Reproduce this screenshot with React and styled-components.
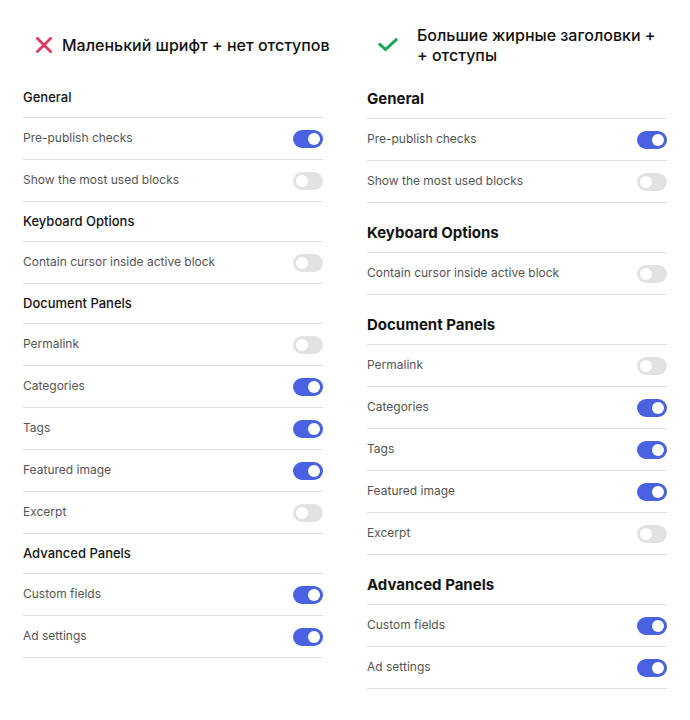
import styled, { createGlobalStyle } from 'styled-components';

const GlobalStyle = createGlobalStyle`
  html, body {
    margin: 0;
    padding: 0;
    background: #fff;
  }
  body {
    font-family: Inter, "Noto Sans", sans-serif;
    -webkit-font-smoothing: antialiased;
  }
`;

const Page = styled.div`
  width: 690px;
  padding: 25px 23px 0;
  box-sizing: border-box;
  display: grid;
  grid-template-columns: 300px 300px;
  column-gap: 44px;
`;

const Column = styled.div`
  display: flex;
  flex-direction: column;
`;

const Title = styled.div`
  height: 40px;
  display: flex;
  align-items: center;
  gap: ${props => props.$gap}px;
  padding-left: ${props => props.$indent}px;
  margin-bottom: ${props => props.$space}px;
  white-space: nowrap;
`;

const TitleIcon = styled.span`
  display: flex;
  align-items: center;
  justify-content: center;
  flex-shrink: 0;
`;

const TitleText = styled.span`
  font-size: 16px;
  line-height: 20px;
  font-weight: 500;
  color: #111;
`;

const Heading = styled.div`
  box-sizing: border-box;
  height: 40px;
  padding-bottom: ${props => props.$bold ? 0 : 2}px;
  margin-top: ${props => props.$bold ? 10 : 0}px;
  display: flex;
  align-items: center;
  border-bottom: 1px solid #e0e0e0;
  font-size: ${props => props.$bold ? 15 : 13}px;
  font-weight: ${props => props.$bold ? 700 : 500};
  color: #141414;
`;

const Row = styled.div`
  height: 41px;
  display: flex;
  align-items: center;
  justify-content: space-between;
  border-bottom: 1px solid #e0e0e0;
`;

const Label = styled.span`
  font-size: 12px;
  color: #555;
  margin-bottom: 2px;
`;

const Toggle = styled.span`
  position: relative;
  width: 30px;
  height: 18px;
  border-radius: 9px;
  background: ${props => props.$on ? '#4862e2' : '#e2e2e2'};

  &::after {
    content: '';
    position: absolute;
    top: 3px;
    left: ${props => props.$on ? '15px' : '3px'};
    width: 12px;
    height: 12px;
    border-radius: 50%;
    background: #fff;
  }
`;

const sections = [
  {
    title: 'General',
    items: [
      { label: 'Pre-publish checks', on: true },
      { label: 'Show the most used blocks', on: false },
    ],
  },
  {
    title: 'Keyboard Options',
    items: [{ label: 'Contain cursor inside active block', on: false }],
  },
  {
    title: 'Document Panels',
    items: [
      { label: 'Permalink', on: false },
      { label: 'Categories', on: true },
      { label: 'Tags', on: true },
      { label: 'Featured image', on: true },
      { label: 'Excerpt', on: false },
    ],
  },
  {
    title: 'Advanced Panels',
    items: [
      { label: 'Custom fields', on: true },
      { label: 'Ad settings', on: true },
    ],
  },
];

const CrossIcon = () => (
  <svg width="16" height="16" viewBox="0 0 16 16">
    <path d="M1.5 1.5 L14.5 14.5 M14.5 1.5 L1.5 14.5" stroke="#dc3a5e" strokeWidth="2.8" strokeLinecap="square" fill="none" />
  </svg>
);

const CheckIcon = () => (
  <svg width="20" height="14" viewBox="0 0 20 14">
    <path d="M2 6.5 L7.5 11.5 L18 1.8" stroke="#1ba653" strokeWidth="3" strokeLinecap="square" fill="none" />
  </svg>
);

const Settings = ({ bold }) => (
  <>
    {sections.map(section => (
      <div key={section.title}>
        <Heading $bold={bold}>{section.title}</Heading>
        {section.items.map(item => (
          <Row key={item.label}>
            <Label>{item.label}</Label>
            <Toggle $on={item.on} />
          </Row>
        ))}
      </div>
    ))}
  </>
);

const App = () => (
  <>
    <GlobalStyle />
    <Page>
      <Column>
        <Title $indent={13} $gap={10} $space={13}>
          <TitleIcon><CrossIcon /></TitleIcon>
          <TitleText>Маленький шрифт + нет отступов</TitleText>
        </Title>
        <Settings />
      </Column>
      <Column>
        <Title $indent={11} $gap={19} $space={4}>
          <TitleIcon><CheckIcon /></TitleIcon>
          <TitleText>Большие жирные заголовки +<br />+ отступы</TitleText>
        </Title>
        <Settings bold />
      </Column>
    </Page>
  </>
);

export default App;
